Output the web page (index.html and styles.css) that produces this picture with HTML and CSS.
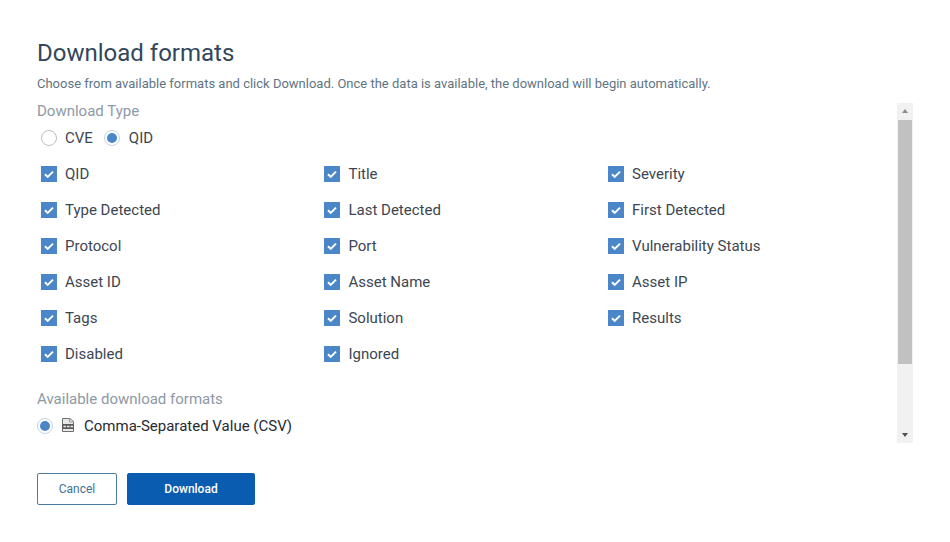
FILE: index.html
```html
<!DOCTYPE html>
<html lang="en">
<head>
<meta charset="utf-8">
<title>Download formats</title>
<link rel="stylesheet" href="styles.css">
</head>
<body>
<main class="dialog">
  <h1 class="title">Download formats</h1>
  <p class="desc">Choose from available formats and click Download. Once the data is available, the download will begin automatically.</p>
  <div class="scrollbox">
    <div class="content">
      <div class="label">Download Type</div>
      <div class="radios">
        <span class="radio"></span><span class="opt">CVE</span>
        <span class="radio on"></span><span class="opt">QID</span>
      </div>
      <div class="grid">
        <div class="item"><svg class="cb" viewBox="0 0 16 16"><rect width="16" height="16" fill="#4a86c8"/><path d="M4 8.3l2.7 2.6L12 5.6" fill="none" stroke="#fff" stroke-width="2"/></svg>QID</div>
        <div class="item"><svg class="cb" viewBox="0 0 16 16"><rect width="16" height="16" fill="#4a86c8"/><path d="M4 8.3l2.7 2.6L12 5.6" fill="none" stroke="#fff" stroke-width="2"/></svg>Title</div>
        <div class="item"><svg class="cb" viewBox="0 0 16 16"><rect width="16" height="16" fill="#4a86c8"/><path d="M4 8.3l2.7 2.6L12 5.6" fill="none" stroke="#fff" stroke-width="2"/></svg>Severity</div>
        <div class="item"><svg class="cb" viewBox="0 0 16 16"><rect width="16" height="16" fill="#4a86c8"/><path d="M4 8.3l2.7 2.6L12 5.6" fill="none" stroke="#fff" stroke-width="2"/></svg>Type Detected</div>
        <div class="item"><svg class="cb" viewBox="0 0 16 16"><rect width="16" height="16" fill="#4a86c8"/><path d="M4 8.3l2.7 2.6L12 5.6" fill="none" stroke="#fff" stroke-width="2"/></svg>Last Detected</div>
        <div class="item"><svg class="cb" viewBox="0 0 16 16"><rect width="16" height="16" fill="#4a86c8"/><path d="M4 8.3l2.7 2.6L12 5.6" fill="none" stroke="#fff" stroke-width="2"/></svg>First Detected</div>
        <div class="item"><svg class="cb" viewBox="0 0 16 16"><rect width="16" height="16" fill="#4a86c8"/><path d="M4 8.3l2.7 2.6L12 5.6" fill="none" stroke="#fff" stroke-width="2"/></svg>Protocol</div>
        <div class="item"><svg class="cb" viewBox="0 0 16 16"><rect width="16" height="16" fill="#4a86c8"/><path d="M4 8.3l2.7 2.6L12 5.6" fill="none" stroke="#fff" stroke-width="2"/></svg>Port</div>
        <div class="item"><svg class="cb" viewBox="0 0 16 16"><rect width="16" height="16" fill="#4a86c8"/><path d="M4 8.3l2.7 2.6L12 5.6" fill="none" stroke="#fff" stroke-width="2"/></svg>Vulnerability Status</div>
        <div class="item"><svg class="cb" viewBox="0 0 16 16"><rect width="16" height="16" fill="#4a86c8"/><path d="M4 8.3l2.7 2.6L12 5.6" fill="none" stroke="#fff" stroke-width="2"/></svg>Asset ID</div>
        <div class="item"><svg class="cb" viewBox="0 0 16 16"><rect width="16" height="16" fill="#4a86c8"/><path d="M4 8.3l2.7 2.6L12 5.6" fill="none" stroke="#fff" stroke-width="2"/></svg>Asset Name</div>
        <div class="item"><svg class="cb" viewBox="0 0 16 16"><rect width="16" height="16" fill="#4a86c8"/><path d="M4 8.3l2.7 2.6L12 5.6" fill="none" stroke="#fff" stroke-width="2"/></svg>Asset IP</div>
        <div class="item"><svg class="cb" viewBox="0 0 16 16"><rect width="16" height="16" fill="#4a86c8"/><path d="M4 8.3l2.7 2.6L12 5.6" fill="none" stroke="#fff" stroke-width="2"/></svg>Tags</div>
        <div class="item"><svg class="cb" viewBox="0 0 16 16"><rect width="16" height="16" fill="#4a86c8"/><path d="M4 8.3l2.7 2.6L12 5.6" fill="none" stroke="#fff" stroke-width="2"/></svg>Solution</div>
        <div class="item"><svg class="cb" viewBox="0 0 16 16"><rect width="16" height="16" fill="#4a86c8"/><path d="M4 8.3l2.7 2.6L12 5.6" fill="none" stroke="#fff" stroke-width="2"/></svg>Results</div>
        <div class="item"><svg class="cb" viewBox="0 0 16 16"><rect width="16" height="16" fill="#4a86c8"/><path d="M4 8.3l2.7 2.6L12 5.6" fill="none" stroke="#fff" stroke-width="2"/></svg>Disabled</div>
        <div class="item"><svg class="cb" viewBox="0 0 16 16"><rect width="16" height="16" fill="#4a86c8"/><path d="M4 8.3l2.7 2.6L12 5.6" fill="none" stroke="#fff" stroke-width="2"/></svg>Ignored</div>
      </div>
      <div class="label formats">Available download formats</div>
      <div class="format">
        <span class="radio on"></span>
        <svg class="fileicon" viewBox="0 0 14 14"><path d="M1.500 .5h7.500l3.500 3v10h-11z" fill="#e8e8e8" stroke="#707070" stroke-width="1"/><path d="M8.500 .5v3.500h4" fill="none" stroke="#999" stroke-width="1"/><rect x="1" y="6" width="12" height="5" fill="#5c5c5c"/><path d="M2.500 8.500h2.500M6 8.500h2.500M9.500 8.500h2.500" stroke="#ececec" stroke-width="1.500"/></svg>
        <span class="fname">Comma-Separated Value (CSV)</span>
      </div>
    </div>
    <div class="track">
      <div class="arrow up"></div>
      <div class="thumb"></div>
      <div class="rest"></div>
      <div class="arrow down"></div>
    </div>
  </div>
  <div class="actions">
    <button class="btn cancel">Cancel</button>
    <button class="btn primary">Download</button>
  </div>
</main>
</body>
</html>
```
FILE: styles.css
```css
html, body { margin: 0; padding: 0; background: #fff; }
body { font-family: Roboto, "Liberation Sans", sans-serif; height: 542px; overflow: hidden; }
.dialog { padding: 38px 37px 0 37px; box-sizing: border-box; height: 542px; }
.title { margin: 0; font-size: 24px; font-weight: 400; line-height: 30px; color: #33475b; }
.desc { margin: 8px 0 0; font-size: 13px; line-height: 16px; color: #5f7482; }
.scrollbox { display: flex; height: 340px; margin-top: 11px; width: 876px; }
.content { flex: 1; margin-top: -2px; }
.label { font-size: 15px; line-height: 20px; color: #8d99a5; }
.radios { display: flex; align-items: center; height: 24px; margin-top: 5px; padding-left: 4px; font-size: 15px; color: #3d4652; }
.radio { width: 14px; height: 14px; border: 1px solid #b9bfc6; border-radius: 50%; box-sizing: content-box; flex: none; background: #fff; position: relative; }
.radio.on { border-color: #c3d3e6; }
.radio.on::after { content: ""; position: absolute; left: 2px; top: 2px; width: 10px; height: 10px; border-radius: 50%; background: #4a86c8; }
.opt { margin-left: 8px; margin-right: 11px; }
.radio.on + .opt { margin-left: 9px; }
.grid { display: grid; grid-template-columns: 283.45px 283.6px 283.5px; grid-auto-rows: 36px; margin-top: 6px; padding-left: 4px; }
.item { display: flex; align-items: center; font-size: 15px; color: #3d4652; }
.cb { width: 16px; height: 16px; margin-right: 8px; flex: none; }
.formats { margin-top: 17px; }
.format { display: flex; align-items: center; height: 24px; margin-top: 5px; }
.fileicon { width: 14px; height: 14px; margin-left: 8px; margin-right: 9px; flex: none; margin-top: -2px; }
.fname { font-size: 15px; color: #262b33; }
.track { width: 16px; display: flex; flex-direction: column; background: #f1f1f1; }
.arrow { height: 17px; position: relative; flex: none; }
.arrow::after { content: ""; position: absolute; left: 5px; border-left: 3px solid transparent; border-right: 3px solid transparent; }
.arrow.up::after { top: 6px; border-bottom: 4px solid #8a8a8a; }
.arrow.down::after { top: 7px; border-top: 4px solid #505050; }
.thumb { height: 244px; background: #c1c1c1; margin: 0 1px; flex: none; }
.rest { flex: 1; }
.actions { display: flex; gap: 10px; margin-top: 30px; }
.btn { font-family: inherit; font-size: 12px; height: 32px; border-radius: 2px; box-sizing: border-box; padding: 0; }
.cancel { width: 80px; background: #fff; border: 1px solid #4a7ba3; color: #3f7295; }
.primary { width: 128px; background: #0a5cb1; border: 1px solid #0a5cb1; color: #fff; font-weight: 500; }
```
